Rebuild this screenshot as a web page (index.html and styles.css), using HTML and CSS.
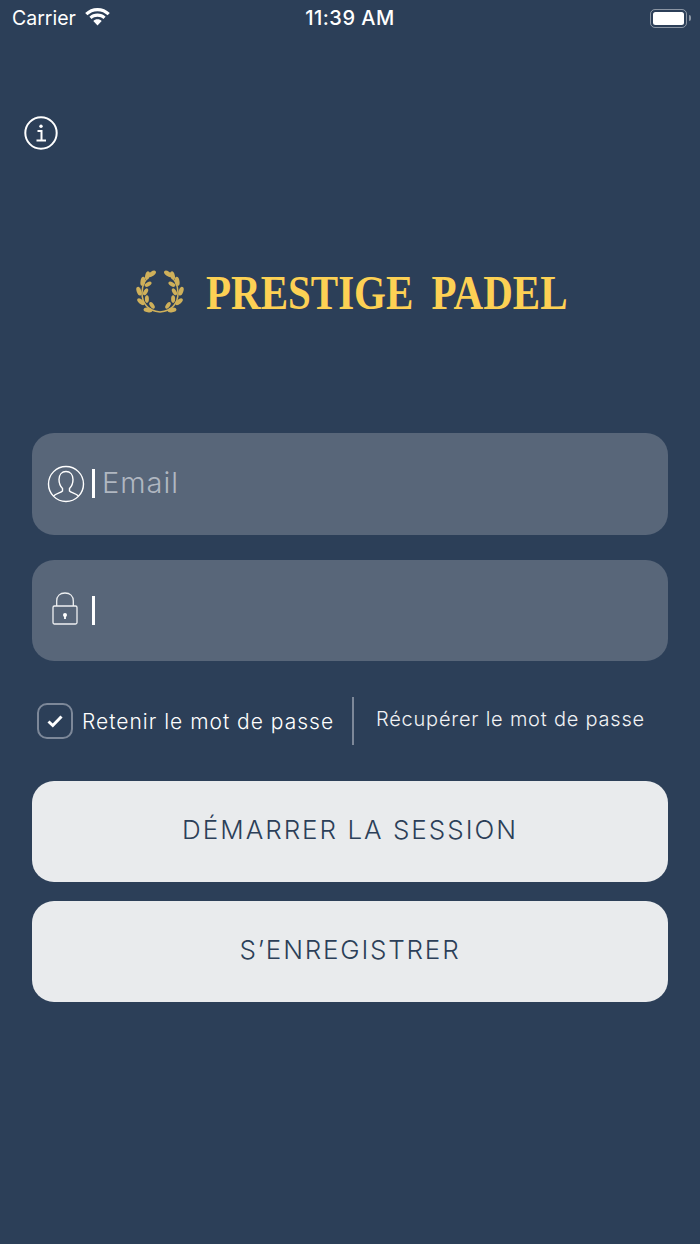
FILE: index.html
```html
<!DOCTYPE html>
<html lang="fr">
<head>
    <meta charset="UTF-8">
    <meta name="viewport" content="width=device-width, initial-scale=1.0">
    <title>Prestige Padel</title>
    <link rel="stylesheet" href="styles.css">
</head>
<body>
    <div class="status-bar">
        <div class="status-left">
            <span class="carrier">Carrier</span>
            <svg class="wifi" width="25" height="18" viewBox="0 0 25 18" fill="#fff">
                <path d="M12.500 0C7.700 0 3.400 1.900 .2 5L2.400 7.300C5 4.800 8.600 3.200 12.500 3.200s7.500 1.600 10.100 4.100L24.800 5C21.600 1.900 17.300 0 12.500 0z"/>
                <path d="M12.500 5.600c-3.200 0-6 1.200-8.100 3.200l2.200 2.300c1.500-1.500 3.600-2.300 5.900-2.300s4.400.8 5.900 2.300l2.200-2.300c-2.100-2-4.900-3.200-8.100-3.200z"/>
                <path d="M12.500 11.200c-1.700 0-3.200.7-4.200 1.700l4.200 4.500 4.200-4.500c-1-1-2.500-1.700-4.200-1.700z"/>
            </svg>
        </div>
        <span class="clock">11:39 AM</span>
        <div class="status-right">
            <div class="battery"><div class="battery-fill"></div></div>
            <div class="battery-cap"></div>
        </div>
    </div>

    <div class="info-row">
        <svg width="34" height="34" viewBox="0 0 34 34" fill="none" stroke="#fff">
            <circle cx="17" cy="17" r="15.700" stroke-width="2"/>
            <circle cx="17" cy="10.200" r="1.700" fill="#fff" stroke="none"/>
            <path d="M13.500 15H17.500V24M12.500 24.500H22" stroke-width="2"/>
        </svg>
    </div>

    <div class="logo">
        <svg class="wreath" width="50" height="46" viewBox="0 0 50 46" fill="#cfb05a">
            <path d="M25 43C12 42 7 33 7 24 7 16 11 9 17 5M25 43C38 42 43 33 43 24 43 16 39 9 33 5" fill="none" stroke="#cfb05a" stroke-width="1.500"/>
            <g id="branch">
                <ellipse cx="17" cy="4.800" rx="2.300" ry="4.500" transform="rotate(55 17 4.800)"/>
                <ellipse cx="12.500" cy="6.500" rx="2.300" ry="4.200" transform="rotate(15 12.500 6.500)"/>
                <ellipse cx="7.800" cy="12.300" rx="2.300" ry="4.500" transform="rotate(10 7.800 12.300)"/>
                <ellipse cx="13.100" cy="15.200" rx="2" ry="3.800" transform="rotate(60 13.100 15.200)"/>
                <ellipse cx="4" cy="22.200" rx="2.300" ry="4.500" transform="rotate(-20 4 22.200)"/>
                <ellipse cx="10.600" cy="22.700" rx="2" ry="3.800" transform="rotate(30 10.600 22.700)"/>
                <ellipse cx="6" cy="32.700" rx="2.300" ry="4.500" transform="rotate(-50 6 32.700)"/>
                <ellipse cx="11.900" cy="30.100" rx="2" ry="3.800" transform="rotate(0 11.900 30.100)"/>
                <ellipse cx="13" cy="41" rx="2.300" ry="4.500" transform="rotate(-80 13 41)"/>
                <ellipse cx="17" cy="36.300" rx="2" ry="3.800" transform="rotate(-35 17 36.300)"/>
            </g>
            <use href="#branch" transform="matrix(-1 0 0 1 50 0)"/>
        </svg>
        <span class="logo-text">PRESTIGE PADEL</span>
    </div>

    <form class="login-form">
        <div class="field">
            <svg class="field-icon" width="38" height="38" viewBox="0 0 38 38" fill="none" stroke="#fff" stroke-width="1.400">
                <circle cx="19" cy="19" r="17.500"/>
                <path d="M6.500 31C9 28.500 14 27.500 15.500 26V23.500C13.500 21.500 12 18.500 12 14.500 12 9.500 15 6.500 19 6.500s7 3 7 8c0 4-1.500 7-3.500 9V26C24 27.500 29 28.500 31.500 31"/>
            </svg>
            <span class="cursor"></span>
            <span class="placeholder">Email</span>
        </div>
        <div class="field">
            <svg class="field-icon" width="38" height="38" viewBox="0 0 38 38" fill="none" stroke="#eef0f2" stroke-width="1.300">
                <rect x="6" y="15" width="24" height="18" rx="1.500"/>
                <path d="M9.700 15V10C9.700 5 13 2 18 2s8.300 3 8.300 8V15"/>
                <path d="M18 24V28" stroke-width="2"/>
                <circle cx="18" cy="24" r="2" fill="#fff" stroke="none"/>
            </svg>
            <span class="cursor"></span>
        </div>

        <div class="options">
            <div class="remember">
                <span class="checkbox">
                    <svg width="18" height="14" viewBox="0 0 18 14" fill="none" stroke="#fff" stroke-width="3">
                        <path d="M2.500 7.500L6.800 11.500L15.500 2.500"/>
                    </svg>
                </span>
                <span class="remember-label">Retenir le mot de passe</span>
            </div>
            <div class="divider"></div>
            <a class="recover">Récupérer le mot de passe</a>
        </div>

        <button type="button" class="btn">DÉMARRER LA SESSION</button>
        <button type="button" class="btn btn-register">S’ENREGISTRER</button>
    </form>
</body>
</html>
```

FILE: styles.css
```css
* {
    box-sizing: border-box;
}

html, body {
    margin: 0;
    padding: 0;
}

body {
    width: 700px;
    height: 1244px;
    overflow: hidden;
    background-color: #2c3f58;
    color: #fff;
    font-family: "Inter", "Liberation Sans", sans-serif;
}

.status-bar {
    display: flex;
    align-items: center;
    justify-content: space-between;
    height: 36px;
    padding: 0 9px 0 12px;
    position: relative;
}

.status-left {
    display: flex;
    align-items: center;
    gap: 9px;
}

.carrier {
    font-size: 19.500px;
}

.clock {
    position: absolute;
    left: 0;
    right: 0;
    text-align: center;
    font-size: 20px;
    font-weight: 500;
    letter-spacing: .5px;
}

.wifi {
    margin-top: -3px;
}

.status-right {
    display: flex;
    align-items: center;
    gap: 2px;
}

.battery {
    width: 37px;
    height: 19px;
    padding: 2px;
    border: 1.500px solid rgba(255, 255, 255, 0.45);
    border-radius: 5px;
}

.battery-fill {
    height: 100%;
    background-color: #fff;
    border-radius: 2.500px;
}

.battery-cap {
    width: 2px;
    height: 6px;
    background-color: rgba(255, 255, 255, 0.45);
    border-radius: 0 2px 2px 0;
}

.info-row {
    padding: 80px 0 0 24px;
    height: 132px;
}

.logo {
    display: flex;
    align-items: center;
    height: 50px;
    margin-top: 99px;
    padding-left: 135px;
    gap: 21px;
}

.logo-text {
    font-family: "Liberation Serif", serif;
    font-weight: 700;
    font-size: 41px;
    color: #fdd154;
    white-space: pre;
    word-spacing: 8px;
    transform: scaleY(1.2);
}

.login-form {
    display: flex;
    flex-direction: column;
    padding: 0 32px;
    margin-top: 116px;
}

.field {
    display: flex;
    align-items: center;
    height: 101.500px;
    margin-bottom: 25px;
    padding-left: 15px;
    border-radius: 22px;
    background-color: #586679;
}

.field-icon {
    flex: none;
}

.cursor {
    width: 3px;
    height: 29px;
    margin-left: 7px;
    background-color: #fff;
}

.placeholder {
    margin: -2px 0 0 7px;
    font-size: 29px;
    font-weight: 300;
    letter-spacing: 1px;
    color: #b0b7c1;
}

.options {
    display: flex;
    align-items: center;
    height: 50px;
    margin: 10px 0 35px;
    padding-left: 5px;
    font-weight: 300;
}

.remember {
    display: flex;
    align-items: center;
    gap: 9px;
    width: 315px;
}

.remember-label {
    font-size: 21px;
    letter-spacing: 1px;
}

.checkbox {
    display: flex;
    align-items: center;
    justify-content: center;
    width: 36px;
    height: 36px;
    border: 2px solid #7d8899;
    border-radius: 10px;
}

.divider {
    width: 2px;
    height: 48px;
    background-color: #7d8899;
}

.recover {
    margin: -4px 0 0 22px;
    font-size: 20px;
    letter-spacing: .78px;
    color: #f1f2f4;
}

.btn {
    height: 101px;
    margin-bottom: 19px;
    padding-bottom: 6px;
    border: none;
    border-radius: 22px;
    background-color: #e9ebed;
    color: #2c3f58;
    font-family: inherit;
    font-size: 26px;
    font-weight: 300;
    letter-spacing: 2px;
}

.btn-register {
    letter-spacing: 1.800px;
}
```
